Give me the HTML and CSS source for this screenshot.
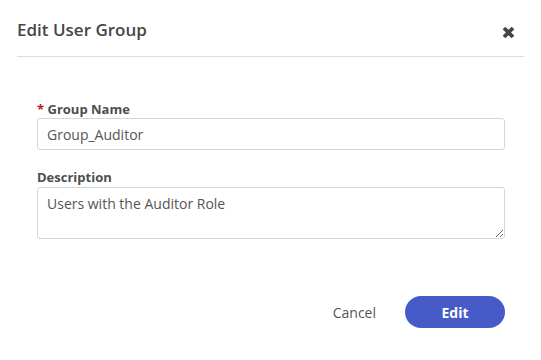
FILE: index.html
```html
<!DOCTYPE html>
<html>
<head>
<meta charset="utf-8">
<link rel="stylesheet" href="styles.css">
</head>
<body>
<div class="modal">
  <div class="modal-header">
    <h2 class="modal-title">Edit User Group</h2>
    <button class="close-btn" aria-label="Close">
      <svg width="13" height="13" viewBox="0 0 13 13"><path d="M2 2 L11 11 M11 2 L2 11" stroke="#444" stroke-width="3.8" stroke-linecap="butt"/></svg>
    </button>
  </div>
  <div class="modal-body">
    <div class="field">
      <label class="field-label"><span class="req">*</span> Group Name</label>
      <input class="text-input" type="text" value="Group_Auditor">
    </div>
    <div class="field">
      <label class="field-label">Description</label>
      <textarea class="text-area">Users with the Auditor Role</textarea>
    </div>
  </div>
  <div class="modal-footer">
    <button class="btn-cancel">Cancel</button>
    <button class="btn-primary">Edit</button>
  </div>
</div>
</body>
</html>
```
FILE: styles.css
```css
html, body {
  margin: 0;
  padding: 0;
  background: #fff;
}
body {
  font-family: "Open Sans", "Noto Sans", sans-serif;
  color: #4a4a4a;
}
.modal {
  width: 541px;
  height: 360px;
  padding: 0 17px;
  box-sizing: border-box;
}
.modal-header {
  height: 56px;
  border-bottom: 1px solid #dcdcdc;
  display: flex;
  align-items: center;
  justify-content: space-between;
}
.modal-title {
  margin: 0;
  font-size: 17px;
  font-weight: 600;
  color: #464646;
  line-height: 24px;
  position: relative;
  top: 2px;
}
.close-btn {
  border: none;
  background: none;
  padding: 0;
  margin-right: 9px;
  width: 13px;
  height: 13px;
  display: flex;
  position: relative;
  top: 4px;
}
.modal-body {
  padding: 43px 19px 0 20px;
  display: flex;
  flex-direction: column;
  gap: 18px;
}
.field {
  display: flex;
  flex-direction: column;
}
.field-label {
  font-size: 13px;
  font-weight: 700;
  line-height: 18px;
  color: #4d4d4d;
}
.req {
  color: #b8142b;
}
.text-input {
  height: 32px;
  box-sizing: border-box;
  border: 1px solid #d6d6d6;
  border-radius: 3px;
  padding: 0 9px;
  font-family: "Open Sans", sans-serif;
  font-size: 14px;
  color: #555;
  margin: 0;
}
.text-area {
  height: 52px;
  box-sizing: border-box;
  border: 1px solid #d6d6d6;
  border-radius: 3px;
  padding: 6px 9px 2px;
  font-family: "Open Sans", sans-serif;
  font-size: 14px;
  line-height: 20px;
  color: #555;
  margin: 1px 0 0;
  resize: vertical;
}
.modal-footer {
  display: flex;
  justify-content: flex-end;
  align-items: center;
  padding: 57px 19px 0 0;
  gap: 29px;
}
.btn-cancel {
  border: none;
  background: none;
  padding: 0;
  font-family: "Open Sans", sans-serif;
  font-size: 14px;
  color: #555;
}
.btn-primary {
  width: 100px;
  height: 32px;
  border: none;
  border-radius: 16px;
  background: #475bc8;
  color: #fff;
  font-family: "Open Sans", sans-serif;
  font-size: 14px;
  font-weight: 700;
}
```
